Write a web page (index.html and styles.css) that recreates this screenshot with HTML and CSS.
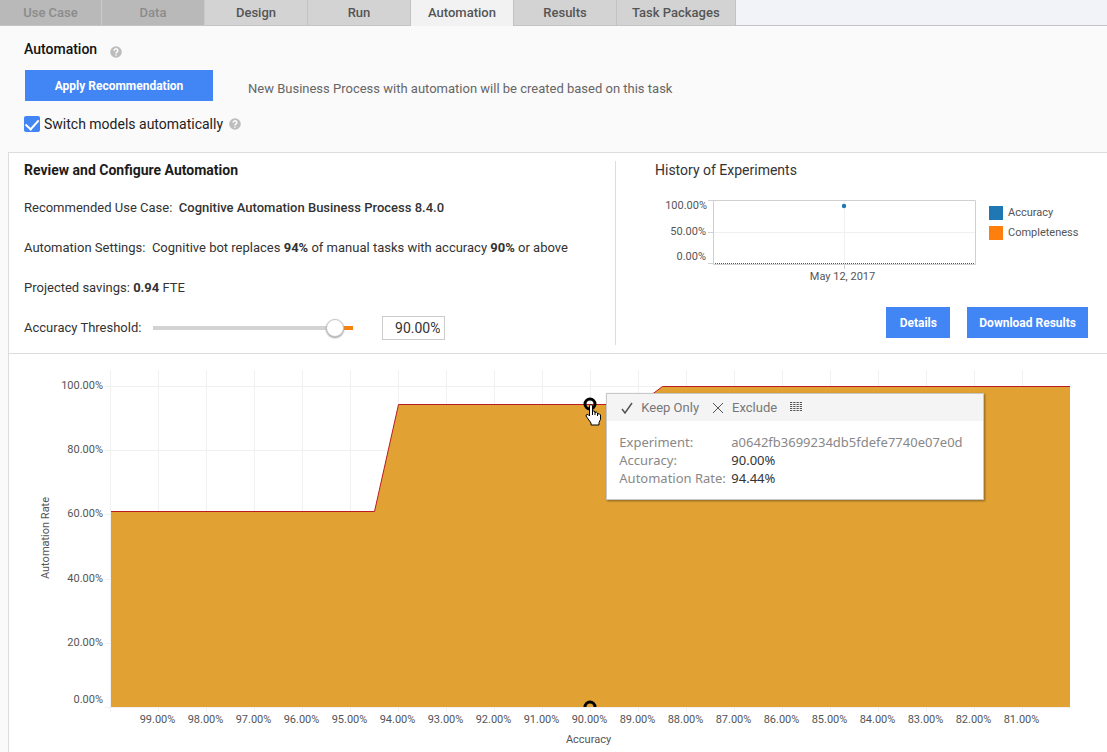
FILE: index.html
```html
<!DOCTYPE html>
<html lang="en">
<head>
<meta charset="utf-8">
<title>Automation</title>
<link rel="stylesheet" href="styles.css">
</head>
<body>
<nav class="tabs">
  <button class="tab tab-first" disabled>Use Case</button>
  <button class="tab" disabled>Data</button>
  <button class="tab">Design</button>
  <button class="tab">Run</button>
  <button class="tab active" aria-current="page">Automation</button>
  <button class="tab">Results</button>
  <button class="tab">Task Packages</button>
</nav>
<main>
  <section class="intro">
    <h1 class="title">Automation
      <svg class="help help-low" width="12" height="12" viewBox="0 0 12 12"><circle cx="6" cy="6" r="5.8"/><path d="M4.2 4.7a1.8 1.8 0 1 1 2.7 1.5C6.2 6.6 6 6.9 6 7.4M6 8.4v1.3"/></svg>
    </h1>
    <div class="apply">
      <button class="btn btn-wide">Apply Recommendation</button>
      <span class="note">New Business Process with automation will be created based on this task</span>
    </div>
    <div class="switch">
      <input class="check" type="checkbox" id="auto" checked>
      <label for="auto">Switch models automatically</label>
      <svg class="help" width="12" height="12" viewBox="0 0 12 12"><circle cx="6" cy="6" r="5.8"/><path d="M4.2 4.7a1.8 1.8 0 1 1 2.7 1.5C6.2 6.6 6 6.9 6 7.4M6 8.4v1.3"/></svg>
    </div>
  </section>

  <section class="panel">
    <div class="summary">
      <div class="review">
        <h2 class="heading">Review and Configure Automation</h2>
        <div class="rows">
          <p>Recommended Use Case:&nbsp; <b class="medium">Cognitive Automation Business Process 8.4.0</b></p>
          <p>Automation Settings:&nbsp; Cognitive bot replaces <b>94%</b> of manual tasks with accuracy <b>90%</b> or above</p>
          <p>Projected savings: <b>0.94</b> FTE</p>
          <div class="threshold">
            <label for="threshold">Accuracy Threshold:</label>
            <input class="slider" type="range" id="threshold" min="0" max="95" value="90">
            <input class="percent" type="text" value="90.00%" aria-label="Accuracy threshold value">
          </div>
        </div>
      </div>
      <div class="history">
        <h2 class="heading light">History of Experiments</h2>
        <div class="mini">
          <svg class="mini-chart" viewBox="0 0 326 90" role="img" aria-label="History of Experiments">
            <path class="grid-line" d="M59 42.500H320M189.500 11V73"/>
            <path class="frame" d="M53 10.500H320.500V74.500H58.500V10M53 42.500H58M53 73.500H58M189.500 75V79"/>
            <path class="zero" d="M60 73.500H320"/>
            <circle class="dot" cx="189" cy="16" r="2.200"/>
            <g class="tick end"><text x="52" y="19">100.00%</text><text x="51" y="45">50.00%</text><text x="51" y="70">0.00%</text></g>
            <text class="tick mid" x="187.500" y="90">May 12, 2017</text>
          </svg>
          <ul class="legend">
            <li><i class="swatch blue"></i>Accuracy</li>
            <li><i class="swatch orange"></i>Completeness</li>
          </ul>
        </div>
        <div class="actions">
          <button class="btn">Details</button>
          <button class="btn">Download Results</button>
        </div>
      </div>
    </div>

    <div class="chart">
      <svg class="plot" viewBox="0 0 1098 398" role="img" aria-label="Automation rate by accuracy">
        <path class="grid-line" d="M96 32.500H1061M96 96.500H1061M96 160.500H1061M96 225.500H1061M96 289.500H1061M96 353.500H1061"/>
        <path class="grid-line" d="M101.500 16V358M149.500 16V358M197.500 16V358M245.500 16V358M293.500 16V358M341.500 16V358M389.500 16V358M437.500 16V358M485.500 16V358M533.500 16V358M581.500 16V358M629.500 16V358M677.500 16V358M725.500 16V358M773.500 16V358M821.500 16V358M869.500 16V358M917.500 16V358M965.500 16V358M1013.500 16V358"/>
        <path class="area" d="M102 157.500H365.500L389.500 50.500H629.500L653.500 32.500H1061V353H102Z"/>
        <path class="line" d="M102 157.500H365.500L389.500 50.500H629.500L653.500 32.500H1061"/>
        <g class="tick end">
          <text x="94" y="35">100.00%</text><text x="94" y="99">80.00%</text><text x="94" y="163">60.00%</text><text x="94" y="228">40.00%</text><text x="94" y="292">20.00%</text><text x="94" y="349">0.00%</text>
        </g>
        <g class="tick mid">
          <text x="148.500" y="369">99.00%</text><text x="196.500" y="369">98.00%</text><text x="244.500" y="369">97.00%</text><text x="292.500" y="369">96.00%</text><text x="340.500" y="369">95.00%</text><text x="388.500" y="369">94.00%</text><text x="436.500" y="369">93.00%</text><text x="484.500" y="369">92.00%</text><text x="532.500" y="369">91.00%</text><text x="580.500" y="369">90.00%</text><text x="628.500" y="369">89.00%</text><text x="676.500" y="369">88.00%</text><text x="724.500" y="369">87.00%</text><text x="772.500" y="369">86.00%</text><text x="820.500" y="369">85.00%</text><text x="868.500" y="369">84.00%</text><text x="916.500" y="369">83.00%</text><text x="964.500" y="369">82.00%</text><text x="1012.500" y="369">81.00%</text>
          <text x="579.500" y="389">Accuracy</text>
          <text transform="translate(40 184) rotate(-90)">Automation Rate</text>
        </g>
        <circle class="ring" cx="581" cy="50" r="5"/>
        <path class="ring" d="M576 353a5 5 0 0 1 10 0"/>
        <path class="hand" d="M580.500 51.500q1.500-2 3 0v6q1-1 2.500 0v1q1.500-1 2.500 .5v1q2-1 3 1v4.500l-1.500 3v2.500h-8v-2l-5-7q0-2 2-1.500l1.500 1.500Z"/>
        <path class="hand-lines" d="M583.500 57v4M586 58v3M588.500 59v3"/>
      </svg>
      <div class="tooltip">
        <div class="tools">
          <button class="tool"><svg width="12" height="12" viewBox="0 0 12 12"><path class="tick-icon" d="M1 7l3 4L11 1"/></svg>Keep Only</button>
          <button class="tool"><svg width="12" height="12" viewBox="0 0 12 12"><path d="M1 1l10 10M11 1L1 11"/></svg>Exclude</button>
          <button class="tool" aria-label="View data"><svg width="12" height="12" viewBox="0 0 12 12"><path d="M0 .5h12M0 2.500h12M0 4.500h12M0 6.500h12M0 8.500h12" stroke-dasharray="2.250 1"/></svg></button>
        </div>
        <dl class="facts">
          <dt>Experiment:</dt><dd class="muted">a0642fb3699234db5fdefe7740e07e0d</dd>
          <dt>Accuracy:</dt><dd>90.00%</dd>
          <dt>Automation Rate:</dt><dd>94.44%</dd>
        </dl>
      </div>
    </div>
  </section>
</main>
</body>
</html>
```
FILE: styles.css
```css
* { box-sizing: border-box; }
body {
  margin: 0;
  background: #fafafa;
  color: #333;
  font: 13px/20px Roboto, "Liberation Sans", sans-serif;
}
h1, h2, p, ul, dl, dd { margin: 0; padding: 0; }
button, input { font-family: inherit; }

.tabs {
  display: flex;
  height: 26px;
  background: #f2f3f8;
  border-bottom: 1px solid #c4c4c4;
}
.tab {
  min-width: 103px;
  height: 25px;
  padding: 0 15px;
  border: 0;
  border-right: 1px solid #c2c2c2;
  background: #d3d3d3;
  color: #555;
  font-size: 13px;
  font-weight: 500;
  line-height: 24px;
}
.tab-first { min-width: 102px; }
.tab:disabled { background: #b9b9b9; border-right-color: #cbcbcb; color: #8b8b8b; }
.tab.active { height: 26px; background: #f2f2f2; }

.intro { padding: 13px 24px 18px; }
.title {
  display: flex;
  align-items: center;
  gap: 13px;
  color: #111;
  font-size: 14px;
  font-weight: 500;
}
.help { flex: none; fill: #bdbdbd; }
.help path { fill: none; stroke: #fff; stroke-width: 1.500; }
.help-low { margin-top: 6px; }
.apply { display: flex; gap: 35px; margin: 11px 0 13px 1px; }
.note { padding-top: 9px; color: #666; }
.btn {
  min-width: 64px;
  height: 31px;
  padding: 0 12px;
  border: 0;
  background: #4285f4;
  color: #fff;
  font-size: 12px;
  font-weight: 700;
}
.btn-wide { width: 188px; }
.switch { display: flex; align-items: center; font-size: 14px; color: #222; }
.switch .help { margin-left: 6px; }
.check {
  appearance: none;
  width: 16px;
  height: 16px;
  margin: 0 4px 0 0;
  border-radius: 2px;
  background: #4285f4;
}
.check:checked::before {
  content: "";
  display: block;
  width: 6px;
  height: 11px;
  margin: 1px 0 0 5px;
  border: solid #fff;
  border-width: 0 2px 2px 0;
  transform: rotate(42deg);
  transform-origin: 50% 40%;
}

.panel {
  margin-left: 8px;
  border: solid #ddd;
  border-width: 1px 0 0 1px;
  background: #fff;
}
.summary {
  display: grid;
  grid-template-columns: 607fr 491fr;
  padding: 8px 0;
  border-bottom: 1px solid #ddd;
}
.review { padding-left: 15px; border-right: 1px solid #ddd; }
.history { min-width: 0; padding: 0 19px 0 39px; }
.heading { color: #1c1c1c; font-size: 14px; font-weight: 700; line-height: 18px; }
.heading.light { color: #333; font-weight: 400; }
.rows { display: flex; flex-direction: column; gap: 20px; margin: 19px 0 7px; }
b { font-weight: 700; }
.medium { font-weight: 500; }
.threshold { display: flex; align-items: center; height: 20px; }
.slider {
  appearance: none;
  width: 200px;
  height: 18px;
  margin: 0 29px 0 12px;
  background: linear-gradient(90deg, #d3d3d3 91%, #f6820d 91%) center / 100% 4px no-repeat;
}
.slider::-webkit-slider-thumb {
  appearance: none;
  width: 18px;
  height: 18px;
  border: 1px solid #c4c4c4;
  border-radius: 50%;
  background: #fff;
  box-shadow: 0 1px 2px #999;
}
.percent {
  width: 63px;
  height: 24px;
  padding: 0 4px;
  border: 1px solid #ccc;
  color: #333;
  font-size: 14px;
  text-align: right;
}

.mini { display: flex; gap: 8px; margin-top: 11px; }
.mini-chart { flex: 326; min-width: 0; overflow: visible; }
.legend { flex: 99; list-style: none; padding-top: 13px; color: #555; font-size: 11px; }
.legend li { display: flex; align-items: center; gap: 5px; }
.swatch { width: 14px; height: 14px; }
.blue { background: #1f77b4; }
.orange { background: #ff7f0e; }
.actions { display: flex; justify-content: flex-end; gap: 17px; margin-top: 27px; }

.grid-line { fill: none; stroke: #f0f0f0; }
.frame { fill: none; stroke: #d0d0d0; }
.zero { stroke: #555; stroke-dasharray: 1 1; }
.dot { fill: #1f77b4; }
.tick { fill: #555; font-size: 11px; }
.end { text-anchor: end; }
.mid { text-anchor: middle; }

.chart { position: relative; }
.plot { display: block; width: 100%; }
.area { fill: #e1a233; }
.line { fill: none; stroke: #b91c24; }
.ring { fill: none; stroke: #000; stroke-width: 3; }
.hand { fill: #fff; stroke: #000; stroke-linejoin: round; }
.hand-lines { stroke: #000; }

.tooltip {
  position: absolute;
  left: 54.400%;
  top: 9.800%;
  min-width: 378px;
  border: 1px solid #c8c8c8;
  background: #fff;
  box-shadow: 1px 1px 2px #0006;
}
.tools { display: flex; gap: 13px; height: 27px; padding: 0 14px; background: #f4f4f4; }
.tool {
  display: flex;
  align-items: center;
  gap: 8px;
  padding: 0;
  border: 0;
  background: none;
  color: #777;
  font-size: 13px;
}
.tool svg { fill: none; stroke: #555; }
.tick-icon { stroke-width: 1.500; }
.facts {
  display: grid;
  grid-template-columns: 112px auto;
  padding: 12px;
  color: #333;
  font: 13px/18px "Noto Sans", "Open Sans", sans-serif;
}
.facts dt, .muted { color: #888; }
```
